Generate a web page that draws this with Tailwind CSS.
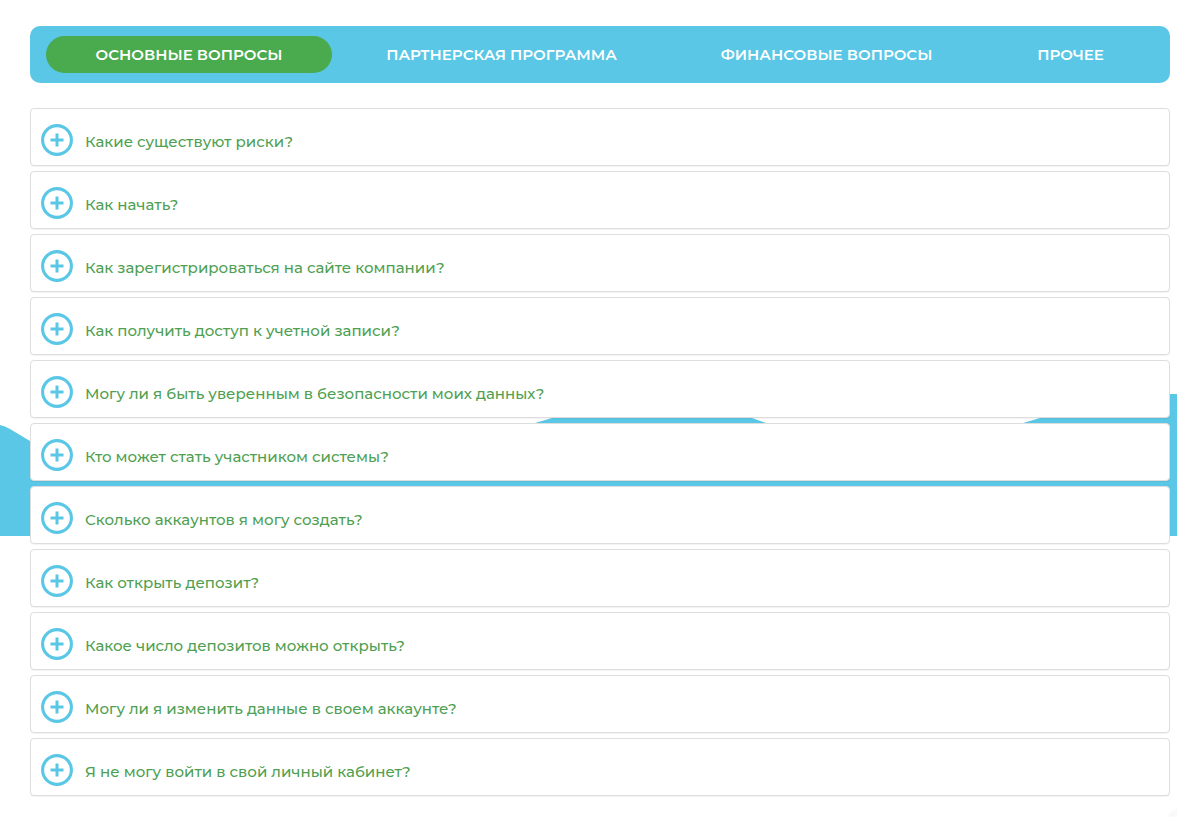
<!DOCTYPE html>
<html lang="ru">
<head>
<meta charset="utf-8">
<meta name="viewport" content="width=device-width, initial-scale=1">
<title>Вопросы и ответы</title>
<script src="https://cdn.jsdelivr.net/npm/@tailwindcss/browser@4"></script>
</head>
<body class="bg-white font-['Montserrat','Inter',sans-serif]">
<svg class="hidden"><symbol id="plus" viewBox="0 0 32 32"><circle cx="16" cy="16" r="14.4" fill="none" stroke="currentColor" stroke-width="3.1"/><path d="M16 9.5v13M9.5 16h13" stroke="currentColor" stroke-width="3"/></symbol></svg>
<div class="relative isolate overflow-hidden pt-[26px] pr-[7px] pb-[21px] pl-[30px]">
  <svg class="absolute top-[394px] left-0 -z-10 h-[142px] w-full text-[#59c7e5]" viewBox="0 0 1177 142" preserveAspectRatio="none" aria-hidden="true"><path fill="currentColor" d="M0 31Q5 32 10 35L30 47L60 66H400L535 29L552 24Q570 18 590 18H720Q736 18 752 24L766 29L860 66H900L1023 29L1040 24L1140 2Q1150 0 1160 0H1177V142H0Z"/></svg>
  <div class="absolute -right-3 -bottom-3 size-5 rounded-full bg-gray-50 shadow-sm" aria-hidden="true"></div>

  <nav class="grid grid-cols-[286fr_329fr_311fr_167fr] gap-[5px] rounded-[10px] bg-[#59c7e5] px-4 py-[10px] text-[15px] leading-[37px] font-semibold text-white uppercase" aria-label="Разделы">
    <button type="button" class="rounded-full bg-[#4aaa4e] whitespace-nowrap uppercase">Основные вопросы</button>
    <button type="button" class="rounded-full whitespace-nowrap uppercase">Партнерская программа</button>
    <button type="button" class="rounded-full whitespace-nowrap uppercase">Финансовые вопросы</button>
    <button type="button" class="rounded-full whitespace-nowrap uppercase">Прочее</button>
  </nav>

  <main id="questions" class="mt-[25px] grid gap-[5px] text-[15px] leading-6 font-medium text-[#4f9f52] *:flex *:h-[58px] *:items-start *:gap-3 *:rounded-sm *:border *:border-[#dddddd] *:bg-white *:pt-[15px] *:pl-[10px] *:text-left *:shadow-[0_1px_1px_rgba(0,0,0,0.05)]">
    <button type="button" aria-expanded="false"><svg class="size-8 shrink-0 text-[#59c7e5]" aria-hidden="true"><use href="#plus"/></svg><span class="pt-[6px]">Какие существуют риски?</span></button>
    <button type="button" aria-expanded="false"><svg class="size-8 shrink-0 text-[#59c7e5]" aria-hidden="true"><use href="#plus"/></svg><span class="pt-[6px]">Как начать?</span></button>
    <button type="button" aria-expanded="false"><svg class="size-8 shrink-0 text-[#59c7e5]" aria-hidden="true"><use href="#plus"/></svg><span class="pt-[6px]">Как зарегистрироваться на сайте компании?</span></button>
    <button type="button" aria-expanded="false"><svg class="size-8 shrink-0 text-[#59c7e5]" aria-hidden="true"><use href="#plus"/></svg><span class="pt-[6px]">Как получить доступ к учетной записи?</span></button>
    <button type="button" aria-expanded="false"><svg class="size-8 shrink-0 text-[#59c7e5]" aria-hidden="true"><use href="#plus"/></svg><span class="pt-[6px]">Могу ли я быть уверенным в безопасности моих данных?</span></button>
    <button type="button" aria-expanded="false"><svg class="size-8 shrink-0 text-[#59c7e5]" aria-hidden="true"><use href="#plus"/></svg><span class="pt-[6px]">Кто может стать участником системы?</span></button>
    <button type="button" aria-expanded="false"><svg class="size-8 shrink-0 text-[#59c7e5]" aria-hidden="true"><use href="#plus"/></svg><span class="pt-[6px]">Сколько аккаунтов я могу создать?</span></button>
    <button type="button" aria-expanded="false"><svg class="size-8 shrink-0 text-[#59c7e5]" aria-hidden="true"><use href="#plus"/></svg><span class="pt-[6px]">Как открыть депозит?</span></button>
    <button type="button" aria-expanded="false"><svg class="size-8 shrink-0 text-[#59c7e5]" aria-hidden="true"><use href="#plus"/></svg><span class="pt-[6px]">Какое число депозитов можно открыть?</span></button>
    <button type="button" aria-expanded="false"><svg class="size-8 shrink-0 text-[#59c7e5]" aria-hidden="true"><use href="#plus"/></svg><span class="pt-[6px]">Могу ли я изменить данные в своем аккаунте?</span></button>
    <button type="button" aria-expanded="false"><svg class="size-8 shrink-0 text-[#59c7e5]" aria-hidden="true"><use href="#plus"/></svg><span class="pt-[6px]">Я не могу войти в свой личный кабинет?</span></button>
  </main>
</div>
</body>
</html>
